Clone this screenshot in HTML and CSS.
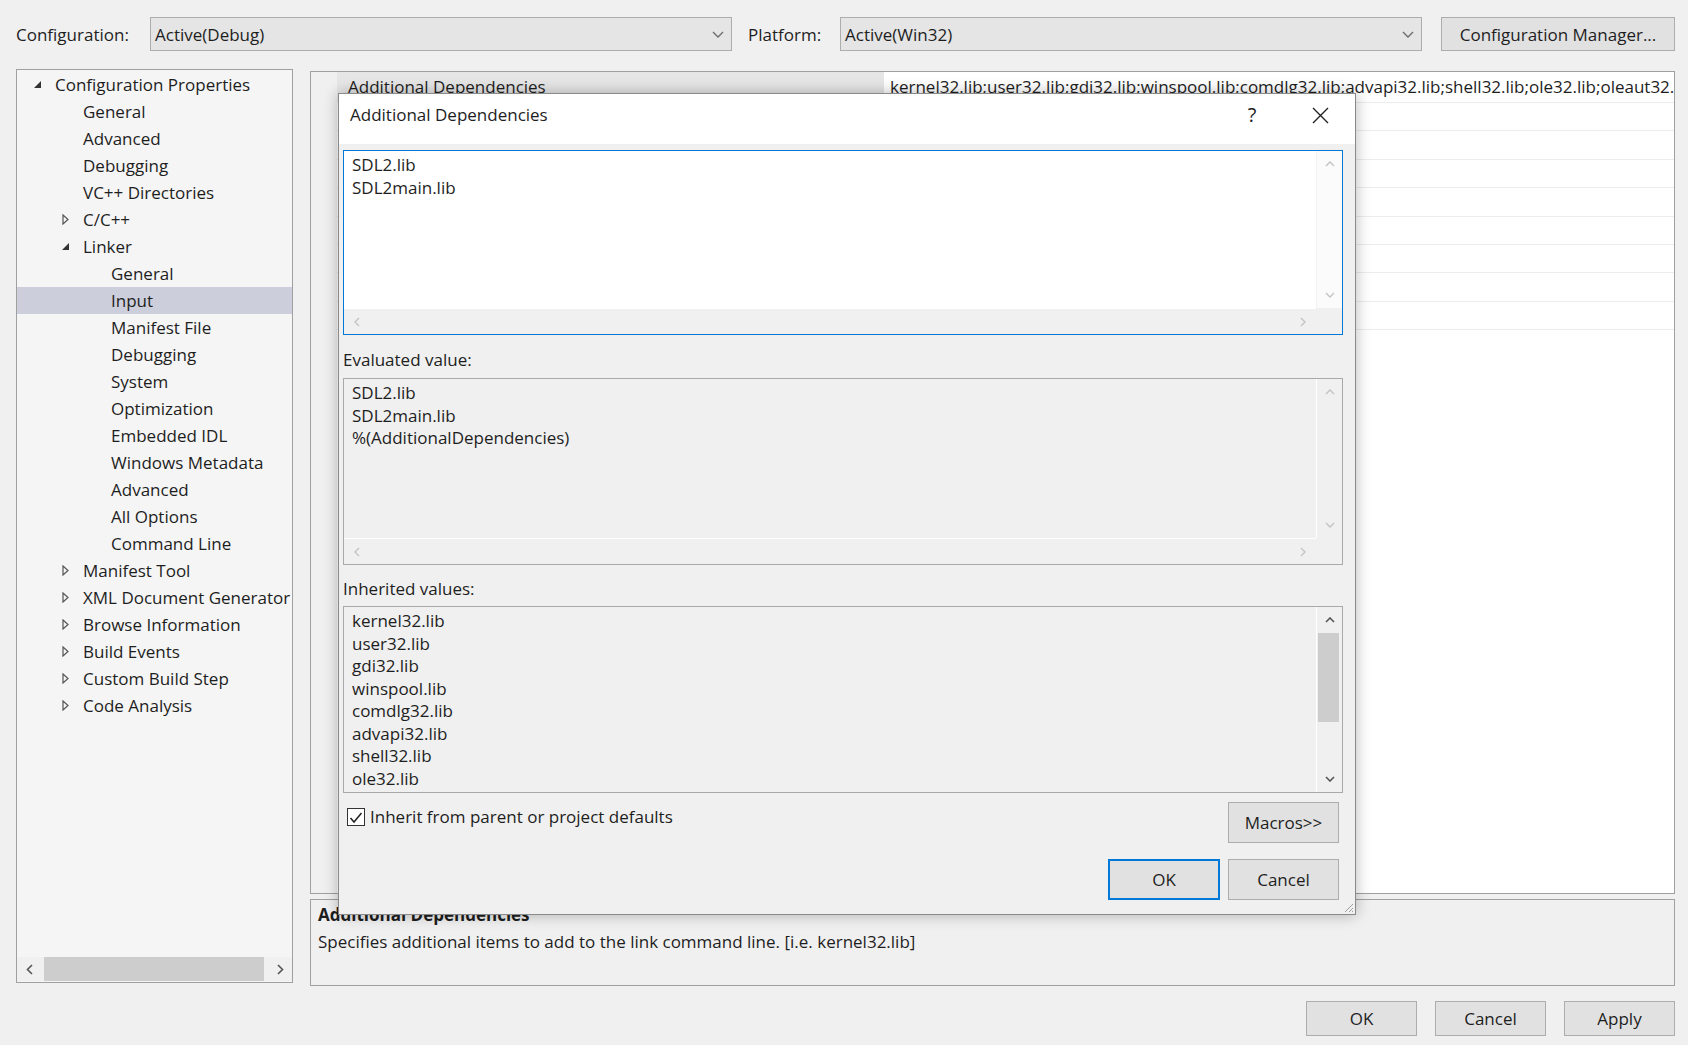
FILE: index.html
```html
<!DOCTYPE html>
<html lang="en">
  <head>
    <meta charset="UTF-8" />
    <title>Property Pages</title>
    <link rel="stylesheet" href="styles.css">
  </head>
  <body>
    <div class="window">
      <div class="topbar">
        <span class="top-label">Configuration:</span>
        <div class="combo">
          <span>Active(Debug)</span>
          <svg class="chev" width="12" height="7" viewBox="0 0 12 7"><path d="M1 1 L6 6 L11 1" /></svg>
        </div>
        <span class="top-label platform">Platform:</span>
        <div class="combo">
          <span>Active(Win32)</span>
          <svg class="chev" width="12" height="7" viewBox="0 0 12 7"><path d="M1 1 L6 6 L11 1" /></svg>
        </div>
        <button class="btn config-btn">Configuration Manager...</button>
      </div>

      <div class="content">
        <div class="tree-panel">
          <ul class="tree">
            <li class="lvl0"><span class="tog"><svg width="7" height="7" viewBox="0 0 7 7"><path class="open" d="M7 0 V7 H0 Z" /></svg></span>Configuration Properties</li>
            <li class="lvl1"><span class="tog"></span>General</li>
            <li class="lvl1"><span class="tog"></span>Advanced</li>
            <li class="lvl1"><span class="tog"></span>Debugging</li>
            <li class="lvl1"><span class="tog"></span>VC++ Directories</li>
            <li class="lvl1"><span class="tog"><svg width="7" height="11" viewBox="0 0 7 11"><path class="shut" d="M1 1 L6 5.5 L1 10 Z" /></svg></span>C/C++</li>
            <li class="lvl1"><span class="tog"><svg width="7" height="7" viewBox="0 0 7 7"><path class="open" d="M7 0 V7 H0 Z" /></svg></span>Linker</li>
            <li class="lvl2"><span class="tog"></span>General</li>
            <li class="lvl2 sel"><span class="tog"></span>Input</li>
            <li class="lvl2"><span class="tog"></span>Manifest File</li>
            <li class="lvl2"><span class="tog"></span>Debugging</li>
            <li class="lvl2"><span class="tog"></span>System</li>
            <li class="lvl2"><span class="tog"></span>Optimization</li>
            <li class="lvl2"><span class="tog"></span>Embedded IDL</li>
            <li class="lvl2"><span class="tog"></span>Windows Metadata</li>
            <li class="lvl2"><span class="tog"></span>Advanced</li>
            <li class="lvl2"><span class="tog"></span>All Options</li>
            <li class="lvl2"><span class="tog"></span>Command Line</li>
            <li class="lvl1"><span class="tog"><svg width="7" height="11" viewBox="0 0 7 11"><path class="shut" d="M1 1 L6 5.5 L1 10 Z" /></svg></span>Manifest Tool</li>
            <li class="lvl1"><span class="tog"><svg width="7" height="11" viewBox="0 0 7 11"><path class="shut" d="M1 1 L6 5.5 L1 10 Z" /></svg></span>XML Document Generator</li>
            <li class="lvl1"><span class="tog"><svg width="7" height="11" viewBox="0 0 7 11"><path class="shut" d="M1 1 L6 5.5 L1 10 Z" /></svg></span>Browse Information</li>
            <li class="lvl1"><span class="tog"><svg width="7" height="11" viewBox="0 0 7 11"><path class="shut" d="M1 1 L6 5.5 L1 10 Z" /></svg></span>Build Events</li>
            <li class="lvl1"><span class="tog"><svg width="7" height="11" viewBox="0 0 7 11"><path class="shut" d="M1 1 L6 5.5 L1 10 Z" /></svg></span>Custom Build Step</li>
            <li class="lvl1"><span class="tog"><svg width="7" height="11" viewBox="0 0 7 11"><path class="shut" d="M1 1 L6 5.5 L1 10 Z" /></svg></span>Code Analysis</li>
          </ul>
          <div class="tree-scroll">
            <span class="arr on"><svg width="7" height="11" viewBox="0 0 7 11"><path d="M6 1 L1.5 5.5 L6 10" /></svg></span>
            <span class="tree-thumb"></span>
            <span class="arr on"><svg width="7" height="11" viewBox="0 0 7 11"><path d="M1 1 L5.5 5.5 L1 10" /></svg></span>
          </div>
        </div>

        <div class="right-col">
          <div class="prop-panel">
            <div class="gutter"></div>
            <div class="prop-grid">
              <div class="prop-row first">
                <span class="prop-name">Additional Dependencies</span>
                <span class="prop-value">kernel32.lib;user32.lib;gdi32.lib;winspool.lib;comdlg32.lib;advapi32.lib;shell32.lib;ole32.lib;oleaut32.lib;uuid.lib;odbc32.lib;odbccp32.lib;%(AdditionalDependencies)</span>
              </div>
              <div class="prop-row"></div>
              <div class="prop-row"></div>
              <div class="prop-row"></div>
              <div class="prop-row"></div>
              <div class="prop-row"></div>
              <div class="prop-row"></div>
              <div class="prop-row"></div>
              <div class="prop-row"></div>
            </div>
          </div>
          <div class="desc-panel">
            <div class="desc-title">Additional Dependencies</div>
            <div class="desc-text">Specifies additional items to add to the link command line. [i.e. kernel32.lib]</div>
          </div>
        </div>
      </div>

      <div class="actions">
        <button class="btn">OK</button>
        <button class="btn">Cancel</button>
        <button class="btn">Apply</button>
      </div>
    </div>

    <!-- modal editor dialog on top of the property page -->
    <div class="dialog">
      <div class="dlg-title">
        <span class="dlg-title-text">Additional Dependencies</span>
        <span class="dlg-help">?</span>
        <span class="dlg-close">
          <svg width="17" height="17" viewBox="0 0 17 17"><path d="M1 1 L16 16 M16 1 L1 16" /></svg>
        </span>
      </div>
      <div class="dlg-body">
        <div class="field edit">
          <div class="field-text">SDL2.lib<br>SDL2main.lib</div>
          <div class="vscroll">
            <span class="arr"><svg width="10" height="6" viewBox="0 0 10 6"><path d="M1 5 L5 1 L9 5" /></svg></span>
            <span class="arr bottom"><svg width="10" height="6" viewBox="0 0 10 6"><path d="M1 1 L5 5 L9 1" /></svg></span>
          </div>
          <div class="hscroll">
            <span class="arr"><svg width="6" height="10" viewBox="0 0 6 10"><path d="M5 1 L1 5 L5 9" /></svg></span>
            <span class="arr"><svg width="6" height="10" viewBox="0 0 6 10"><path d="M1 1 L5 5 L1 9" /></svg></span>
          </div>
          <div class="corner"></div>
        </div>

        <div class="field-label">Evaluated value:</div>
        <div class="field tall">
          <div class="field-text">SDL2.lib<br>SDL2main.lib<br>%(AdditionalDependencies)</div>
          <div class="vscroll">
            <span class="arr"><svg width="10" height="6" viewBox="0 0 10 6"><path d="M1 5 L5 1 L9 5" /></svg></span>
            <span class="arr bottom"><svg width="10" height="6" viewBox="0 0 10 6"><path d="M1 1 L5 5 L9 1" /></svg></span>
          </div>
          <div class="hscroll">
            <span class="arr"><svg width="6" height="10" viewBox="0 0 6 10"><path d="M5 1 L1 5 L5 9" /></svg></span>
            <span class="arr"><svg width="6" height="10" viewBox="0 0 6 10"><path d="M1 1 L5 5 L1 9" /></svg></span>
          </div>
          <div class="corner"></div>
        </div>

        <div class="field-label second">Inherited values:</div>
        <div class="field tall noh">
          <div class="field-text">kernel32.lib<br>user32.lib<br>gdi32.lib<br>winspool.lib<br>comdlg32.lib<br>advapi32.lib<br>shell32.lib<br>ole32.lib</div>
          <div class="vscroll">
            <span class="arr on"><svg width="10" height="6" viewBox="0 0 10 6"><path d="M1 5 L5 1 L9 5" /></svg></span>
            <span class="thumb"></span>
            <span class="arr on bottom"><svg width="10" height="6" viewBox="0 0 10 6"><path d="M1 1 L5 5 L9 1" /></svg></span>
          </div>
        </div>

        <div class="dlg-opts">
          <label class="check">
            <span class="checkbox"><svg width="16" height="16" viewBox="0 0 16 16"><path d="M2.5 8 L6 12 L13.5 3" /></svg></span>
            <span>Inherit from parent or project defaults</span>
          </label>
          <button class="btn dlg-btn">Macros&gt;&gt;</button>
        </div>

        <div class="dlg-actions">
          <button class="btn dlg-btn default">OK</button>
          <button class="btn dlg-btn">Cancel</button>
        </div>
      </div>
      <svg class="grip" width="12" height="12" viewBox="0 0 12 12"><path d="M11 3 L3 11 M11 7 L7 11 M11 10 L10 11" /></svg>
    </div>
  </body>
</html>
```

FILE: styles.css
```css
* {
  margin: 0;
  padding: 0;
  list-style: none;
  box-sizing: border-box;
}
body {
  width: 1688px;
  height: 1045px;
  overflow: hidden;
  position: relative;
  background-color: #f0f0f0;
  font-family: "Open Sans", "Noto Sans", sans-serif;
  font-size: 17px;
  color: #1e1e1e;
}
button {
  font: inherit;
  color: inherit;
}
svg path {
  fill: none;
  stroke: currentColor;
  stroke-width: 1.3;
}

.window {
  padding: 17px 12px 0 16px;
}

/* top row: configuration / platform */
.topbar {
  display: flex;
  align-items: center;
  height: 34px;
}
.top-label {
  width: 134px;
}
.top-label.platform {
  width: 92px;
  margin-left: 16px;
}
.combo {
  width: 582px;
  height: 34px;
  display: flex;
  align-items: center;
  justify-content: space-between;
  padding: 0 7px 0 4px;
  border: 1px solid #adadad;
  background-color: #e5e5e5;
}
.chev {
  color: #6a6a6a;
}
.btn {
  border: 1px solid #adadad;
  background-color: #e1e1e1;
  cursor: pointer;
}
.config-btn {
  width: 234px;
  height: 34px;
  margin-left: 19px;
}

.content {
  display: flex;
  margin-top: 18px;
}

/* left tree */
.tree-panel {
  width: 277px;
  height: 914px;
  border: 1px solid #a0a0a0;
  background-color: #f5f5f5;
  display: flex;
  flex-direction: column;
}
.tree {
  flex: 1;
  padding-top: 1px;
}
.tree li {
  height: 27px;
  display: flex;
  align-items: center;
  white-space: nowrap;
  padding-left: 10px;
}
.tree .lvl1 {
  padding-left: 38px;
}
.tree .lvl2 {
  padding-left: 66px;
}
.tree li.sel {
  background-color: #cccedb;
}
.tog {
  width: 28px;
  flex: none;
  display: flex;
  align-items: center;
  padding-left: 7px;
}
.tog .open {
  fill: #333;
  stroke: none;
}
.tog .shut {
  stroke: #555;
  stroke-width: 1.2;
}
.tree-scroll {
  height: 24px;
  margin-bottom: 1px;
  display: flex;
  align-items: center;
  background-color: #f0f0f0;
}
.tree-scroll .arr {
  width: 24px;
}
.tree-scroll .arr path {
  stroke-width: 1.7;
}
.tree-thumb {
  width: 220px;
  height: 100%;
  margin-left: 3px;
  margin-right: auto;
  background-color: #cdcdcd;
}

.arr {
  width: 26px;
  height: 26px;
  flex: none;
  display: flex;
  align-items: center;
  justify-content: center;
  color: #c2c2c2;
}
.arr.on {
  color: #555;
}
.arr.on path {
  stroke-width: 1.6;
}

/* right side */
.right-col {
  width: 1365px;
  margin-left: 17px;
  display: flex;
  flex-direction: column;
}
.prop-panel {
  height: 823px;
  margin-top: 2px;
  border: 1px solid #a0a0a0;
  background-color: #fff;
  display: flex;
}
.gutter {
  width: 26px;
  flex: none;
  background-color: #f0f0f0;
}
.prop-grid {
  flex: 1;
  overflow: hidden;
}
.prop-row {
  height: 28.4px;
  border-bottom: 1px solid #ececec;
  display: flex;
}
.prop-row.first {
  height: 31px;
}
.prop-name {
  width: 547px;
  flex: none;
  padding-left: 11px;
  line-height: 29px;
  background-color: #e6e6e6;
}
.prop-value {
  flex: 1;
  padding-left: 6px;
  line-height: 29px;
  white-space: nowrap;
  overflow: hidden;
}
.desc-panel {
  height: 87px;
  margin-top: 5px;
  padding: 4px 7px;
  border: 1px solid #a0a0a0;
  background-color: #f0f0f0;
}
.desc-title {
  font-weight: 700;
  line-height: 22px;
}
.desc-text {
  line-height: 24px;
  margin-top: 4px;
}

.actions {
  display: flex;
  justify-content: flex-end;
  gap: 18px;
  margin-top: 15px;
  padding-right: 1px;
}
.actions .btn {
  width: 111px;
  height: 35px;
}

/* dialog */
.dialog {
  position: absolute;
  left: 338px;
  top: 93px;
  width: 1018px;
  height: 822px;
  border: 1px solid #8a8a8a;
  background-color: #f0f0f0;
  box-shadow: 0 0 14px rgba(0, 0, 0, .28);
  display: flex;
  flex-direction: column;
}
.dlg-title {
  height: 50px;
  flex: none;
  display: flex;
  align-items: flex-start;
  padding: 10px 12px 0 11px;
  line-height: 22px;
  background-color: #fff;
}
.dlg-title-text {
  flex: 1;
}
.dlg-help {
  width: 20px;
  text-align: center;
  font-size: 20px;
}
.dlg-close {
  width: 46px;
  height: 22px;
  margin-left: 35px;
  display: flex;
  align-items: center;
  justify-content: center;
  color: #222;
}
.dlg-close path {
  stroke-width: 1.4;
}
.dlg-body {
  flex: 1;
  padding: 6px 12px 0 4px;
}

.field {
  height: 185px;
  border: 1px solid #a9a9a9;
  background-color: #f0f0f0;
  display: grid;
  grid-template-columns: 1fr 26px;
  grid-template-rows: 1fr 26px;
}
.field.edit {
  border-color: #0078d7;
  background-color: #fff;
}
.field.tall {
  height: 187px;
}
.field.noh {
  grid-template-rows: 1fr;
}
.field-text {
  padding: 3px 8px;
  line-height: 22.5px;
  overflow: hidden;
  white-space: nowrap;
}
.vscroll {
  display: flex;
  flex-direction: column;
  border-left: 1px solid #fff;
}
.edit .vscroll {
  border-left: 1px solid #f3f3f3;
  background-color: #fbfbfb;
}
.vscroll .bottom {
  margin-top: auto;
}
.thumb {
  height: 89px;
  margin: 0 3px 0 1px;
  background-color: #cdcdcd;
}
.hscroll {
  display: flex;
  justify-content: space-between;
  align-items: center;
  border-top: 1px solid #fff;
  background-color: #f0f0f0;
}
.corner {
  background-color: #f0f0f0;
}
.field-label {
  margin: 14px 0 7px;
  line-height: 22px;
}
.field-label.second {
  margin: 13px 0 6px;
}

.dlg-opts {
  display: flex;
  justify-content: space-between;
  align-items: flex-start;
  margin-top: 9px;
  padding: 0 4px;
}
.check {
  display: flex;
  align-items: center;
  gap: 5px;
  margin-top: 4px;
  line-height: 22px;
}
.checkbox {
  width: 18px;
  height: 18px;
  border: 1px solid #333;
  background-color: #fff;
  color: #222;
}
.checkbox path {
  stroke-width: 1.5;
}
.dlg-btn {
  width: 111px;
  height: 41px;
}
.dlg-actions {
  display: flex;
  justify-content: flex-end;
  gap: 8px;
  margin-top: 16px;
  padding-right: 4px;
}
.btn.default {
  width: 112px;
  border: 2px solid #0078d7;
}
.grip {
  position: absolute;
  right: 1px;
  bottom: 1px;
  color: #a0a0a0;
}
.grip path {
  stroke-width: 1;
}
```
